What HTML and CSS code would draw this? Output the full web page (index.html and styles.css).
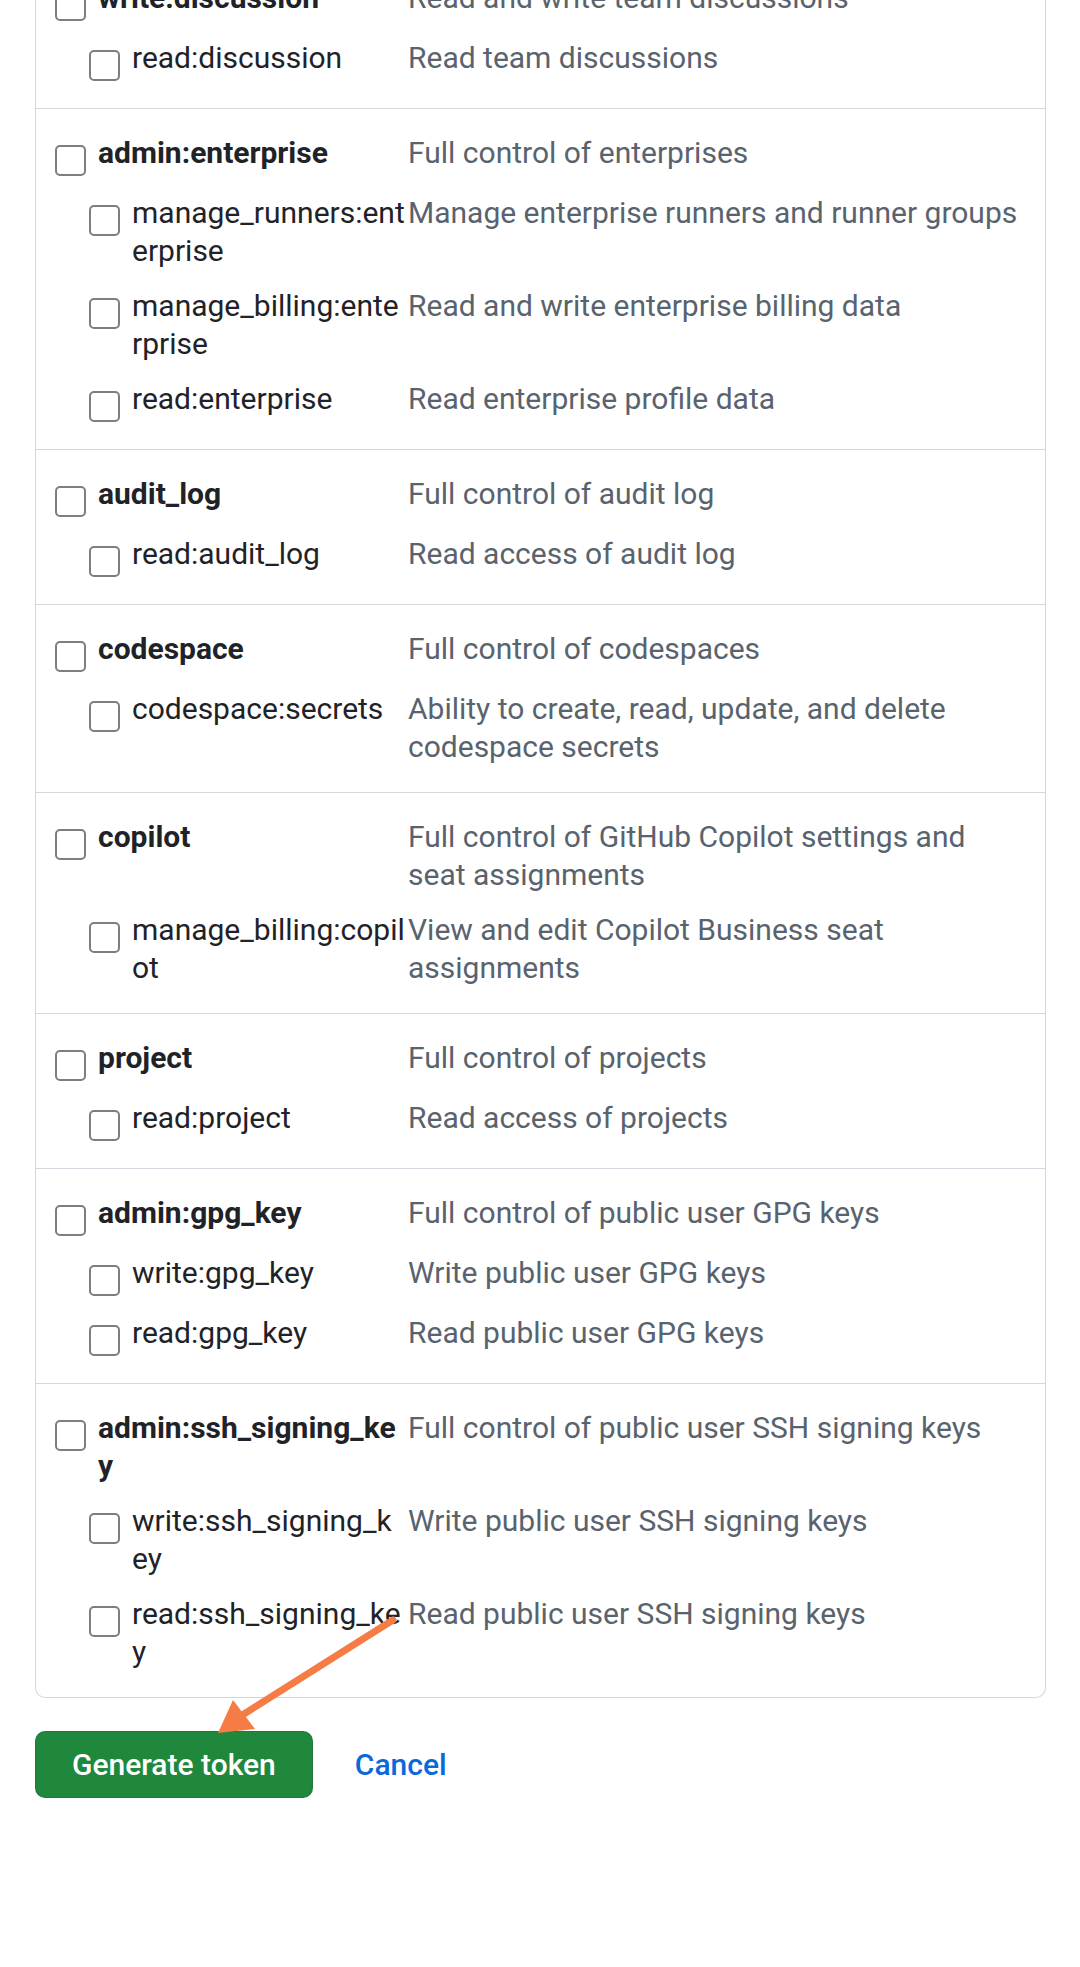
FILE: index.html
```html
<!DOCTYPE html>
<html lang="en">
<head>
<meta charset="utf-8">
<title>Select scopes</title>
<link rel="stylesheet" href="styles.css">
</head>
<body>
<form class="page">
  <div class="scopes">
    <div class="section">
      <div class="row parent"><label class="name"><input type="checkbox" class="cb"><span class="label">write:discussion</span></label><span class="desc">Read and write team discussions</span></div>
      <div class="row child"><label class="name"><input type="checkbox" class="cb"><span class="label">read:discussion</span></label><span class="desc">Read team discussions</span></div>
    </div>
    <div class="section">
      <div class="row parent"><label class="name"><input type="checkbox" class="cb"><span class="label">admin:enterprise</span></label><span class="desc">Full control of enterprises</span></div>
      <div class="row child"><label class="name"><input type="checkbox" class="cb"><span class="label">manage_runners:enterprise</span></label><span class="desc">Manage enterprise runners and runner groups</span></div>
      <div class="row child"><label class="name"><input type="checkbox" class="cb"><span class="label">manage_billing:enterprise</span></label><span class="desc">Read and write enterprise billing data</span></div>
      <div class="row child"><label class="name"><input type="checkbox" class="cb"><span class="label">read:enterprise</span></label><span class="desc">Read enterprise profile data</span></div>
    </div>
    <div class="section">
      <div class="row parent"><label class="name"><input type="checkbox" class="cb"><span class="label">audit_log</span></label><span class="desc">Full control of audit log</span></div>
      <div class="row child"><label class="name"><input type="checkbox" class="cb"><span class="label">read:audit_log</span></label><span class="desc">Read access of audit log</span></div>
    </div>
    <div class="section">
      <div class="row parent"><label class="name"><input type="checkbox" class="cb"><span class="label">codespace</span></label><span class="desc">Full control of codespaces</span></div>
      <div class="row child"><label class="name"><input type="checkbox" class="cb"><span class="label">codespace:secrets</span></label><span class="desc">Ability to create, read, update, and delete codespace secrets</span></div>
    </div>
    <div class="section">
      <div class="row parent"><label class="name"><input type="checkbox" class="cb"><span class="label">copilot</span></label><span class="desc">Full control of GitHub Copilot settings and seat assignments</span></div>
      <div class="row child"><label class="name"><input type="checkbox" class="cb"><span class="label">manage_billing:copilot</span></label><span class="desc">View and edit Copilot Business seat assignments</span></div>
    </div>
    <div class="section">
      <div class="row parent"><label class="name"><input type="checkbox" class="cb"><span class="label">project</span></label><span class="desc">Full control of projects</span></div>
      <div class="row child"><label class="name"><input type="checkbox" class="cb"><span class="label">read:project</span></label><span class="desc">Read access of projects</span></div>
    </div>
    <div class="section">
      <div class="row parent"><label class="name"><input type="checkbox" class="cb"><span class="label">admin:gpg_key</span></label><span class="desc">Full control of public user GPG keys</span></div>
      <div class="row child"><label class="name"><input type="checkbox" class="cb"><span class="label">write:gpg_key</span></label><span class="desc">Write public user GPG keys</span></div>
      <div class="row child"><label class="name"><input type="checkbox" class="cb"><span class="label">read:gpg_key</span></label><span class="desc">Read public user GPG keys</span></div>
    </div>
    <div class="section">
      <div class="row parent"><label class="name"><input type="checkbox" class="cb"><span class="label">admin:ssh_signing_key</span></label><span class="desc">Full control of public user SSH signing keys</span></div>
      <div class="row child"><label class="name"><input type="checkbox" class="cb"><span class="label">write:ssh_signing_key</span></label><span class="desc">Write public user SSH signing keys</span></div>
      <div class="row child"><label class="name"><input type="checkbox" class="cb"><span class="label">read:ssh_signing_key</span></label><span class="desc">Read public user SSH signing keys</span></div>
    </div>
  </div>
  <div class="actions">
    <button type="button" class="btn-primary">Generate token</button>
    <a class="cancel" href="#">Cancel</a>
  </div>
</form>
<svg class="arrow" width="220" height="140" viewBox="0 0 220 140" aria-hidden="true">
  <line x1="193" y1="20" x2="44" y2="114" stroke="#f67c45" stroke-width="7" stroke-linecap="round"/>
  <polygon points="18,133 33,100 55,129" fill="#f67c45"/>
</svg>
</body>
</html>
```

FILE: styles.css
```css
html, body {
  margin: 0;
  padding: 0;
  background: #ffffff;
}

body {
  position: relative;
  font-family: Roboto, "Liberation Sans", sans-serif;
  font-size: 30px;
  line-height: 37.5px;
  color: #1f2328;
  overflow: hidden;
  height: 1967px;
}

.page {
  padding: 0 34px 0 35px;
}

.scopes {
  margin-top: -46px;
  border: 1px solid #d0d7de;
  border-top: none;
  border-radius: 0 0 10px 10px;
}

.section {
  display: flex;
  flex-direction: column;
  gap: 18px;
  padding: 25px 21px 27px 19px;
}

.section + .section {
  border-top: 1px solid #d0d7de;
}

.row {
  display: flex;
  align-items: flex-start;
  min-height: 42px;
}

.name {
  display: flex;
  align-items: flex-start;
  box-sizing: border-box;
  width: 353px;
  flex-shrink: 0;
}

.child .name {
  padding-left: 34px;
}

.cb {
  appearance: none;
  -webkit-appearance: none;
  flex-shrink: 0;
  box-sizing: border-box;
  width: 31px;
  height: 31px;
  margin: 11px 12px 0 0;
  border: 2px solid #7a7f86;
  border-radius: 5px;
  background: #ffffff;
}

.label {
  flex: 1;
  min-width: 0;
  padding-right: 2px;
  word-break: break-all;
}

.parent .label {
  font-weight: 700;
}

.desc {
  flex: 1;
  min-width: 0;
  color: #59636e;
}

.actions {
  display: flex;
  align-items: center;
  gap: 42px;
  margin-top: 33px;
}

.btn-primary {
  height: 67px;
  padding: 0 36px;
  border: 1px solid rgba(31, 35, 40, 0.15);
  border-radius: 10px;
  background: #1f883d;
  color: #ffffff;
  font-family: Roboto, "Liberation Sans", sans-serif;
  font-size: 30px;
  font-weight: 500;
  line-height: 38px;
}

.cancel {
  color: #0969da;
  font-size: 30px;
  font-weight: 500;
  text-decoration: none;
}

.arrow {
  position: absolute;
  left: 200px;
  top: 1600px;
}
```
